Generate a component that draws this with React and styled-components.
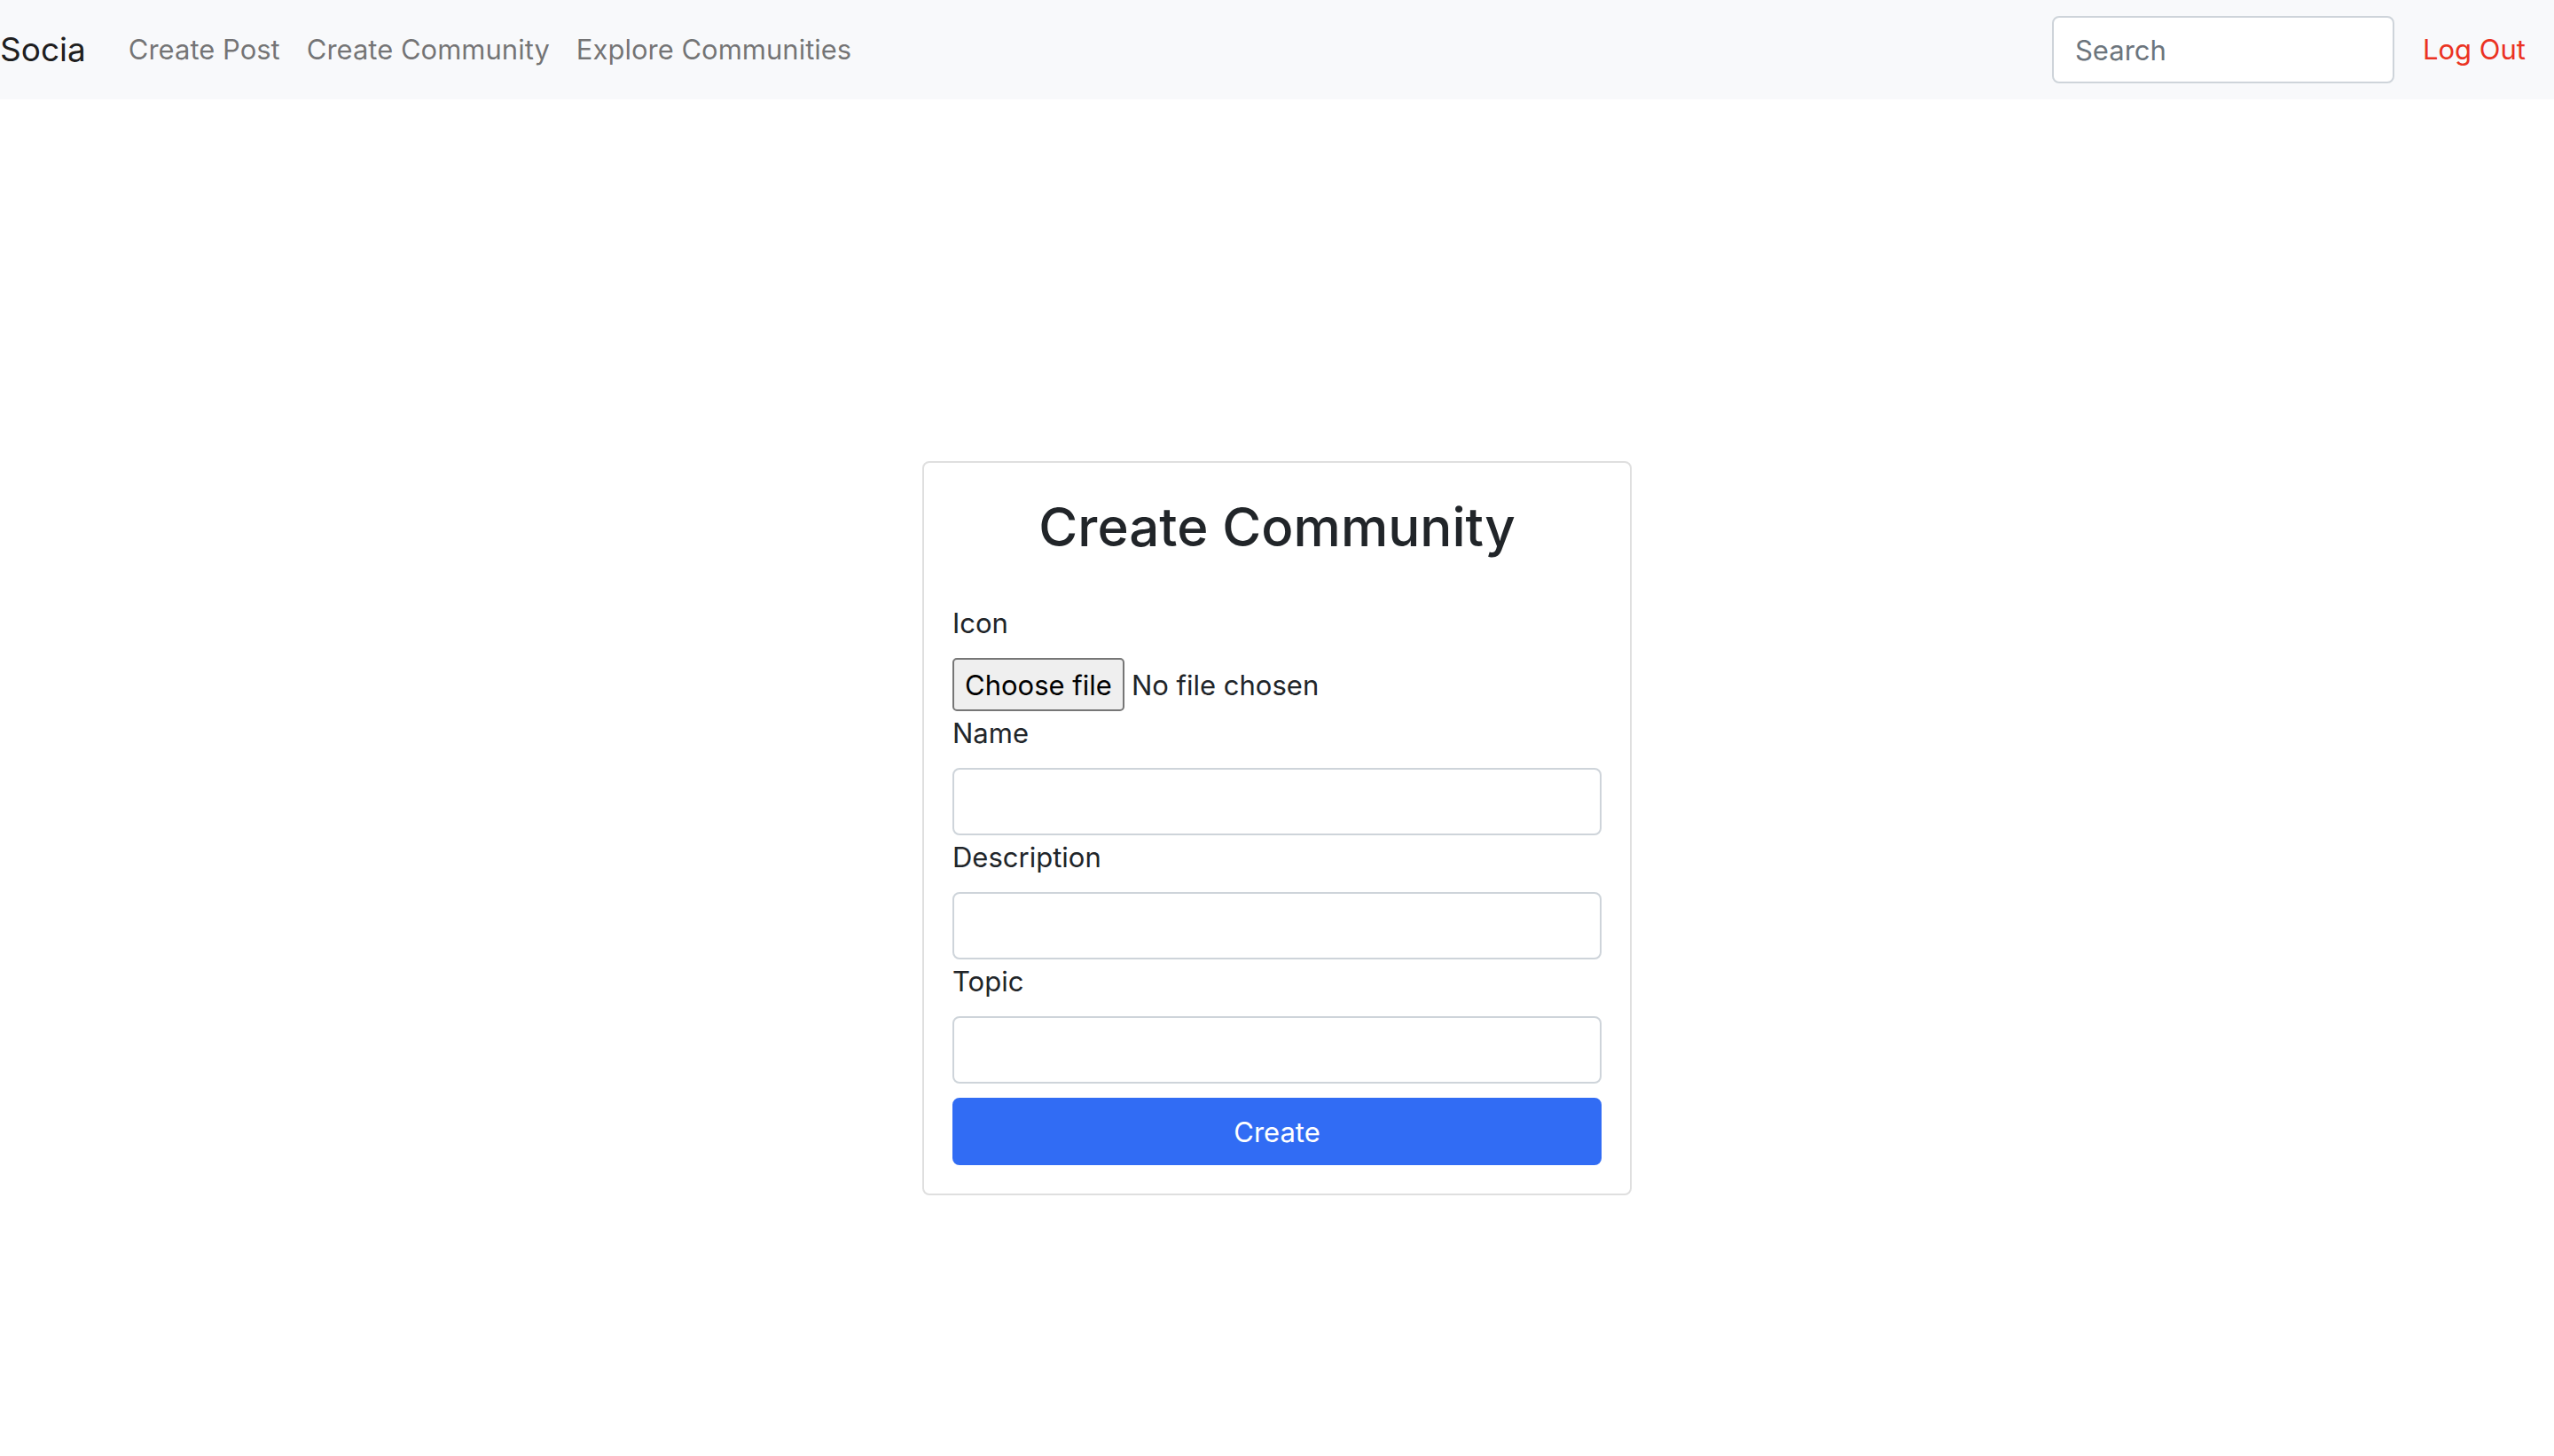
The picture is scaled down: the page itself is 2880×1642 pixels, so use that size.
import React, { useRef, useState } from "react";
import styled, { createGlobalStyle } from "styled-components";

const GlobalStyle = createGlobalStyle`
  *, *::before, *::after { box-sizing: border-box; }
  body {
    margin: 0;
    background: #fff;
    color: #212529;
    font-family: Inter, "Liberation Sans", sans-serif;
    font-size: 31px;
    font-weight: 400;
    line-height: 50px;
  }
  input, button { font: inherit; }
`;

const Navbar = styled.header`
  display: flex;
  align-items: center;
  justify-content: space-between;
  min-height: 112px;
  padding: 0 32px 0 0;
  background: #f8f9fb;
`;

const NavGroup = styled.nav`
  display: flex;
  align-items: center;
  gap: ${({ $gap }) => $gap}px;
`;

const Brand = styled.a`
  margin-right: 18px;
  color: rgba(0, 0, 0, 0.9);
  font-size: 37px;
  line-height: 60px;
  text-decoration: none;
`;

const NavLink = styled.a`
  padding: 16px 0;
  color: ${({ $danger }) => ($danger ? "#eb3323" : "rgba(0, 0, 0, 0.55)")};
  text-decoration: none;
  white-space: nowrap;
`;

const TextInput = styled.input`
  display: block;
  width: 100%;
  height: 76px;
  padding: 12px 24px;
  border: 2px solid #ced4da;
  border-radius: 8px;
  background: #fff;
  color: #212529;

  &::placeholder {
    color: #6c757d;
    opacity: 1;
  }
`;

const SearchForm = styled.form`
  width: 386px;
`;

const Main = styled.main`
  display: flex;
  align-items: center;
  justify-content: center;
  min-height: calc(100vh - 112px);
  padding-top: 114px;
`;

const Card = styled.section`
  width: 800px;
  max-width: 100%;
  padding: 32px;
  border: 2px solid #dfdfdf;
  border-radius: 8px;
  background: #fff;
`;

const Title = styled.h2`
  margin: 0 0 44px;
  font-size: 60px;
  font-weight: 500;
  line-height: 80px;
  text-align: center;
`;

const Label = styled.label`
  display: block;
  margin-bottom: 14px;
`;

const FilePicker = styled.div`
  position: relative;
  display: flex;
  align-items: center;
  gap: 8px;
`;

const HiddenFileInput = styled.input`
  position: absolute;
  width: 1px;
  height: 1px;
  opacity: 0;
  pointer-events: none;
`;

const FileButton = styled.button`
  height: 60px;
  padding: 2px 12px 0;
  border: 2px solid #767676;
  border-radius: 5px;
  background: #efefef;
  color: #000;
`;

const FileName = styled.span`
  padding-top: 2px;
`;

const SubmitButton = styled.button`
  display: block;
  width: 100%;
  height: 76px;
  margin-top: 16px;
  padding: 12px 24px;
  border: 2px solid #316cf4;
  border-radius: 8px;
  background: #316cf4;
  color: #fff;
`;

const links = ["Create Post", "Create Community", "Explore Communities"];
const fields = ["Name", "Description", "Topic"];

export default function App() {
  const fileInput = useRef(null);
  const [fileName, setFileName] = useState("No file chosen");

  return (
    <>
      <GlobalStyle />
      <Navbar>
        <NavGroup $gap={30}>
          <Brand href="#">Socia</Brand>
          {links.map((text) => (
            <NavLink key={text} href="#">{text}</NavLink>
          ))}
        </NavGroup>
        <NavGroup $gap={32}>
          <SearchForm role="search" onSubmit={(e) => e.preventDefault()}>
            <TextInput type="text" placeholder="Search" aria-label="Search" />
          </SearchForm>
          <NavLink href="#" $danger>Log Out</NavLink>
        </NavGroup>
      </Navbar>
      <Main>
        <Card>
          <Title>Create Community</Title>
          <form onSubmit={(e) => e.preventDefault()}>
            <Label htmlFor="icon">Icon</Label>
            <FilePicker>
              <HiddenFileInput
                ref={fileInput}
                id="icon"
                type="file"
                tabIndex={-1}
                onChange={(e) => setFileName(e.target.files[0]?.name ?? "No file chosen")}
              />
              <FileButton type="button" onClick={() => fileInput.current.click()}>
                Choose file
              </FileButton>
              <FileName>{fileName}</FileName>
            </FilePicker>
            {fields.map((text) => (
              <div key={text}>
                <Label htmlFor={text.toLowerCase()}>{text}</Label>
                <TextInput id={text.toLowerCase()} type="text" />
              </div>
            ))}
            <SubmitButton type="submit">Create</SubmitButton>
          </form>
        </Card>
      </Main>
    </>
  );
}
